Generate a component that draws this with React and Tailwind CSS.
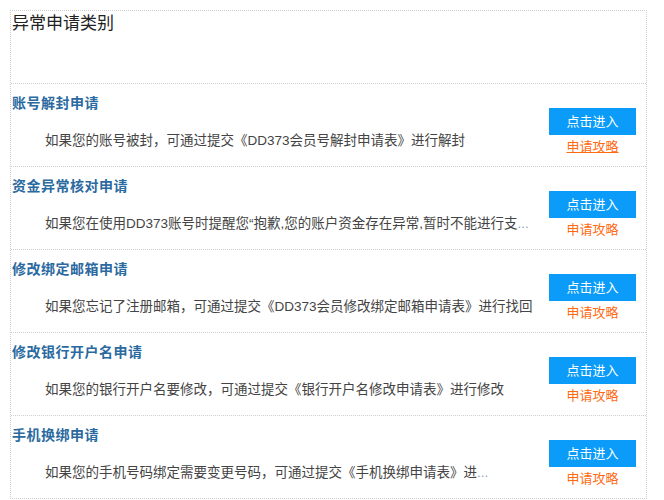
import React from "react";

const rows = [
  {
    title: "账号解封申请",
    desc: "如果您的账号被封，可通过提交《DD373会员号解封申请表》进行解封",
    underline: true,
  },
  {
    title: "资金异常核对申请",
    desc: "如果您在使用DD373账号时提醒您\u201c抱歉,您的账户资金存在异常,暂时不能进行支",
    more: true,
  },
  {
    title: "修改绑定邮箱申请",
    desc: "如果您忘记了注册邮箱，可通过提交《DD373会员修改绑定邮箱申请表》进行找回",
  },
  {
    title: "修改银行开户名申请",
    desc: "如果您的银行开户名要修改，可通过提交《银行开户名修改申请表》进行修改",
  },
  {
    title: "手机换绑申请",
    desc: "如果您的手机号码绑定需要变更号码，可通过提交《手机换绑申请表》进",
    more: true,
  },
];

export default function App() {
  return (
    <div
      className="bg-white w-[664px] h-[500px] pt-[10px] pl-[10px]"
      style={{ fontFamily: '"Liberation Sans", "Noto Sans CJK SC", sans-serif' }}
    >
      <div className="w-[637px] border border-dotted border-[#cfcfcf]">
        <div className="h-[72px] pl-[1px] text-[17px] leading-[26px] text-[#222]">
          异常申请类别
        </div>
        {rows.map((r, i) => (
          <div key={i} className="flex h-[83px] border-t border-dotted border-[#cfcfcf]">
            <div className="flex-1 min-w-0 pl-[1px]">
              <div className="pt-[9px] text-[14px] tracking-[0.5px] leading-[20px] font-bold text-[#2a6aa0]">
                {r.title}
              </div>
              <div className="mt-[18px] pl-[33px] text-[13.5px] leading-[20px] text-[#444] whitespace-nowrap">
                {r.desc}
                {r.more && <span className="text-[#8aa0b8]">...</span>}
              </div>
            </div>
            <div className="w-[87px] mr-[10px] pt-[24px] flex flex-col items-center">
              <div className="w-[87px] h-[27px] bg-[#0a9cf8] text-white text-[13px] leading-[27px] text-center">
                点击进入
              </div>
              <div
                className={
                  "mt-[2px] text-[13px] leading-[20px] text-[#ff6a13] " +
                  (r.underline ? "underline" : "")
                }
              >
                申请攻略
              </div>
            </div>
          </div>
        ))}
      </div>
    </div>
  );
}
